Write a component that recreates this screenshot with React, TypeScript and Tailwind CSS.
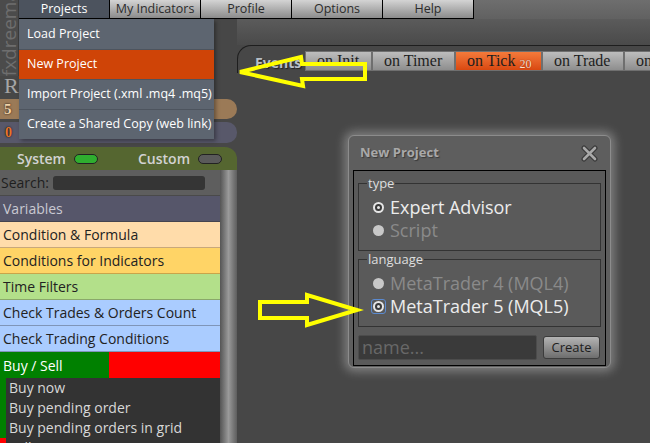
const menuItems = ['My Indicators', 'Profile', 'Options', 'Help']

const tabs = [
  { label: 'on Init', w: 'w-[67px]' },
  { label: 'on Timer', w: 'w-[83px]' },
  { label: 'on Tick', w: 'w-[87px]', active: true, badge: '20' },
  { label: 'on Trade', w: 'w-[82px]' },
  { label: 'on Chart', w: 'w-[90px]' },
]

const blocks = [
  { label: 'Variables', cls: 'bg-[#56566a] text-[#c9c9d2] border-[#44444f]' },
  { label: 'Condition & Formula', cls: 'bg-[#ffdcaa] text-[#222] border-[#c9a87a]' },
  { label: 'Conditions for Indicators', cls: 'bg-[#ffd466] text-[#222] border-[#c9a54a]' },
  { label: 'Time Filters', cls: 'bg-[#b3e08a] text-[#222] border-[#8aa86a]' },
  { label: 'Check Trades & Orders Count', cls: 'bg-[#aaccff] text-[#222] border-[#7f95b8]' },
  { label: 'Check Trading Conditions', cls: 'bg-[#aaccff] text-[#222] border-[#7f95b8]' },
]

function MenuBar() {
  return (
    <div className="flex h-[19px] shrink-0 bg-linear-to-b from-[#6e6e6e] to-[#616161]">
      <div className="w-[19px]" />
      <div className="flex w-[91px] items-center justify-center border-r border-b border-black bg-[#4c535e] text-[12.5px] text-white">
        Projects
      </div>
      {menuItems.map((m) => (
        <div
          key={m}
          className="flex w-[91px] items-center justify-center border-r border-b border-black bg-linear-to-b from-[#d4d4d4] to-[#8c8c8c] text-[12.5px] text-[#2c2c2c]"
        >
          {m}
        </div>
      ))}
    </div>
  )
}

function ProjectsMenu() {
  const items = ['Load Project', 'New Project', 'Import Project (.xml .mq4 .mq5)', 'Create a Shared Copy (web link)']
  return (
    <div className="absolute left-[19px] top-[19px] w-[195px] bg-[#5d6570] shadow-[2px_2px_4px_rgba(0,0,0,0.35)]">
      {items.map((it, i) => (
        <div
          key={it}
          className={
            'flex h-[30px] items-center pl-[8px] text-[12.5px] text-white ' +
            (i > 0 ? 'border-t border-[#4d545e] ' : '') +
            (it === 'New Project' ? 'bg-[#cf4407]' : '')
          }
        >
          {it}
        </div>
      ))}
    </div>
  )
}

function Logo() {
  return (
    <div className="absolute left-0 top-0 flex h-[76px] w-[19px] items-end overflow-hidden border-r border-[#3a3a3a] bg-[#4b4b4b]">
      <span className="rotate-180 pb-[4px] text-[19px] leading-[19px] text-[#6e6e6e] [writing-mode:vertical-rl]">
        fxdreema
      </span>
    </div>
  )
}

function Toggle({ on }: { on?: boolean }) {
  return (
    <span
      className={
        'inline-block h-[10px] w-[24px] rounded-full border border-[#222] ' +
        (on ? 'bg-[#2fae2f]' : 'bg-[#5a5a5a]')
      }
    />
  )
}

function LeftPanel() {
  return (
    <div className="flex w-[237px] shrink-0 flex-col">
      <div className="h-[57px] shrink-0" />
      <div className="h-[22px] shrink-0 pl-[4px] font-['Liberation_Serif',serif] text-[22px] leading-[20px] text-[#a5a5a5]">
        R
      </div>
      <div className="mt-px flex h-[20px] shrink-0 items-center rounded-r-[10px] bg-[#9b7a57] pl-[4px] font-['Liberation_Serif',serif] text-[15px] font-bold text-[#f3d2a8] [text-shadow:0_0_2px_#000]">
        5
      </div>
      <div className="mt-[3px] flex h-[21px] shrink-0 items-center rounded-r-[10px] bg-[#58586a] pl-[5px] font-['Liberation_Serif',serif] text-[14px] font-bold text-[#e8752a] [text-shadow:0_0_2px_#000]">
        0
      </div>
      <div className="mt-[4px] flex h-[23px] shrink-0 items-center rounded-tr-[12px] bg-[#556630] pl-[17px] text-[14px] font-semibold text-[#d2d2d2]">
        <span>System</span>
        <span className="ml-[8px]">
          <Toggle on />
        </span>
        <span className="ml-[40px]">Custom</span>
        <span className="ml-[8px]">
          <Toggle />
        </span>
      </div>
      <div className="flex min-h-0 flex-1">
        <div className="flex w-[220px] flex-col">
          <div className="flex h-[26px] shrink-0 items-center border-b border-[#4a4a4a] bg-[#5e5e5e] pl-px text-[14px] text-[#1e1e1e]">
            Search:
            <span className="ml-[4px] h-[14px] w-[152px] rounded-[3px] bg-[#353535]" />
          </div>
          {blocks.map((b) => (
            <div key={b.label} className={'flex h-[26px] shrink-0 items-center border-b pl-[3px] text-[14px] ' + b.cls}>
              {b.label}
            </div>
          ))}
          <div className="flex h-[26px] shrink-0 text-[14px] text-white">
            <div className="flex w-[109px] items-center bg-[#008000] pl-[3px]">Buy / Sell</div>
            <div className="flex-1 bg-[#ff0000]" />
          </div>
          <div className="flex flex-1 bg-[#333]">
            <div className="flex w-[6px] flex-col">
              <div className="h-[60px] bg-[#008000]" />
              <div className="flex-1 bg-[#ff0000]" />
            </div>
            <div className="flex flex-col pl-[3px] text-[14px] leading-[20px] text-[#d8d8d8]">
              <span>Buy now</span>
              <span>Buy pending order</span>
              <span>Buy pending orders in grid</span>
              <span>Sell now</span>
            </div>
          </div>
        </div>
        <div className="w-[17px] bg-linear-to-r from-[#555] via-[#9a9a9a] to-[#5e5e5e]" />
      </div>
    </div>
  )
}

function Workspace() {
  return (
    <div className="flex min-w-0 flex-1 flex-col">
      <div className="h-[26px] shrink-0 bg-linear-to-b from-[#5b5b5b] to-[#4a4a4a]" />
      <div className="flex h-[28px] shrink-0 items-start rounded-tl-[14px] border-t border-l border-[#1e1e1e] bg-[#474747] pt-[5px] pl-[17px]">
        <div className="w-[50px] shrink-0 pt-[1px] text-[14px] font-bold text-[#b9c0c8] [text-shadow:1px_1px_1px_#222]">
          Events
        </div>
        <div className="flex">
          {tabs.map((t) => (
            <div
              key={t.label}
              className={
                'flex h-[20px] shrink-0 items-center border border-[#6f6f6f] pl-[11px] font-[\'Liberation_Serif\',serif] text-[16px] text-[#1e1e1e] ' +
                t.w +
                ' ' +
                (t.active
                  ? 'bg-linear-to-b from-[#f47a3a] to-[#d9480f]'
                  : 'bg-linear-to-b from-[#bdbdbd] to-[#8e8e8e]')
              }
            >
              {t.label}
              {t.badge && (
                <span className="ml-[4px] mt-[6px] text-[12px] text-[#ffe0c8] [text-shadow:0_0_1px_#600]">{t.badge}</span>
              )}
            </div>
          ))}
        </div>
      </div>
      <div className="flex-1 bg-[#474747]" />
    </div>
  )
}

function Radio({ checked, focus }: { checked?: boolean; focus?: boolean }) {
  return (
    <span
      className={
        'flex h-[15px] w-[15px] items-center justify-center rounded-[3px] ' +
        (focus ? 'border border-[#5b8ad0]' : 'border border-transparent')
      }
    >
      <span
        className={
          'flex h-[11px] w-[11px] items-center justify-center rounded-full ' +
          (checked ? 'bg-[#e6e6e6]' : 'bg-[#c8c8c8]')
        }
      >
        {checked && <span className="h-[7px] w-[7px] rounded-full border-2 border-[#3a3a3a] bg-[#e6e6e6]" />}
      </span>
    </span>
  )
}

function Option({ label, checked, disabled, focus }: { label: string; checked?: boolean; disabled?: boolean; focus?: boolean }) {
  return (
    <div className="flex h-[23px] items-center gap-[4px] pl-[12px]">
      <Radio checked={checked} focus={focus} />
      <span className={'text-[18px] ' + (disabled ? 'text-[#8a8a8a]' : 'text-[#ececec]')}>{label}</span>
    </div>
  )
}

function NewProjectDialog() {
  return (
    <div className="absolute left-[348px] top-[135px] flex h-[233px] w-[263px] flex-col rounded-[6px] border border-[#8c8c8c] bg-[#5e5e5e] shadow-[0_0_10px_4px_rgba(190,190,190,0.45)]">
      <div className="flex h-[34px] shrink-0 items-center justify-between pr-[12px] pl-[11px]">
        <span className="text-[13px] font-bold text-[#a9a9a9] [text-shadow:1px_1px_1px_#3a3a3a]">New Project</span>
        <svg width="17" height="17" viewBox="0 0 17 17">
          <path d="M3 3 L14 14 M14 3 L3 14" stroke="#3a3a3a" strokeWidth="5" strokeLinecap="round" />
          <path d="M3 3 L14 14 M14 3 L3 14" stroke="#a8a8a8" strokeWidth="2.6" strokeLinecap="round" />
        </svg>
      </div>
      <div className="mx-[4px] mb-[1px] flex flex-1 flex-col border border-black bg-[#5a5a5a] px-[4px]">
        <fieldset className="mt-[5px] border border-[#333] px-0 pt-[6px] pb-[8px]">
          <legend className="ml-[8px] px-px text-[13px] leading-[14px] text-[#dedede]">type</legend>
          <Option label="Expert Advisor" checked />
          <Option label="Script" disabled />
        </fieldset>
        <fieldset className="mt-px border border-[#333] px-0 pt-[6px] pb-[8px]">
          <legend className="ml-[8px] px-px text-[13px] leading-[14px] text-[#dedede]">language</legend>
          <Option label="MetaTrader 4 (MQL4)" disabled />
          <Option label="MetaTrader 5 (MQL5)" checked focus />
        </fieldset>
        <div className="mt-[8px] flex items-center">
          <div className="flex h-[25px] w-[179px] items-center rounded-[2px] border border-[#4c4c4c] bg-[#3a3a3a] pl-[3px] text-[18px] text-[#686868]">
            name...
          </div>
          <div className="ml-[6px] flex h-[23px] w-[57px] items-center justify-center rounded-[3px] border border-[#3c3c3c] bg-linear-to-b from-[#b4b4b4] to-[#6e6e6e] text-[13px] text-[#1e1e1e]">
            Create
          </div>
        </div>
      </div>
    </div>
  )
}

function Arrows() {
  return (
    <svg className="pointer-events-none absolute left-0 top-0" width="650" height="443" viewBox="0 0 650 443">
      <polygon
        points="240,72 301,57 302,64 365,64 365,79 302,79 303,86"
        fill="none"
        stroke="#ffff00"
        strokeWidth="4"
        strokeLinejoin="miter"
      />
      <polygon
        points="260,302 307,302 307,295 357,310 307,325 307,318 260,318"
        fill="none"
        stroke="#ffff00"
        strokeWidth="4"
        strokeLinejoin="miter"
      />
    </svg>
  )
}

export default function App() {
  return (
    <div className="relative flex h-[443px] w-[650px] flex-col overflow-hidden bg-[#474747] font-['Open_Sans',sans-serif]">
      <MenuBar />
      <div className="flex min-h-0 flex-1">
        <LeftPanel />
        <Workspace />
      </div>
      <ProjectsMenu />
      <Logo />
      <NewProjectDialog />
      <Arrows />
    </div>
  )
}
